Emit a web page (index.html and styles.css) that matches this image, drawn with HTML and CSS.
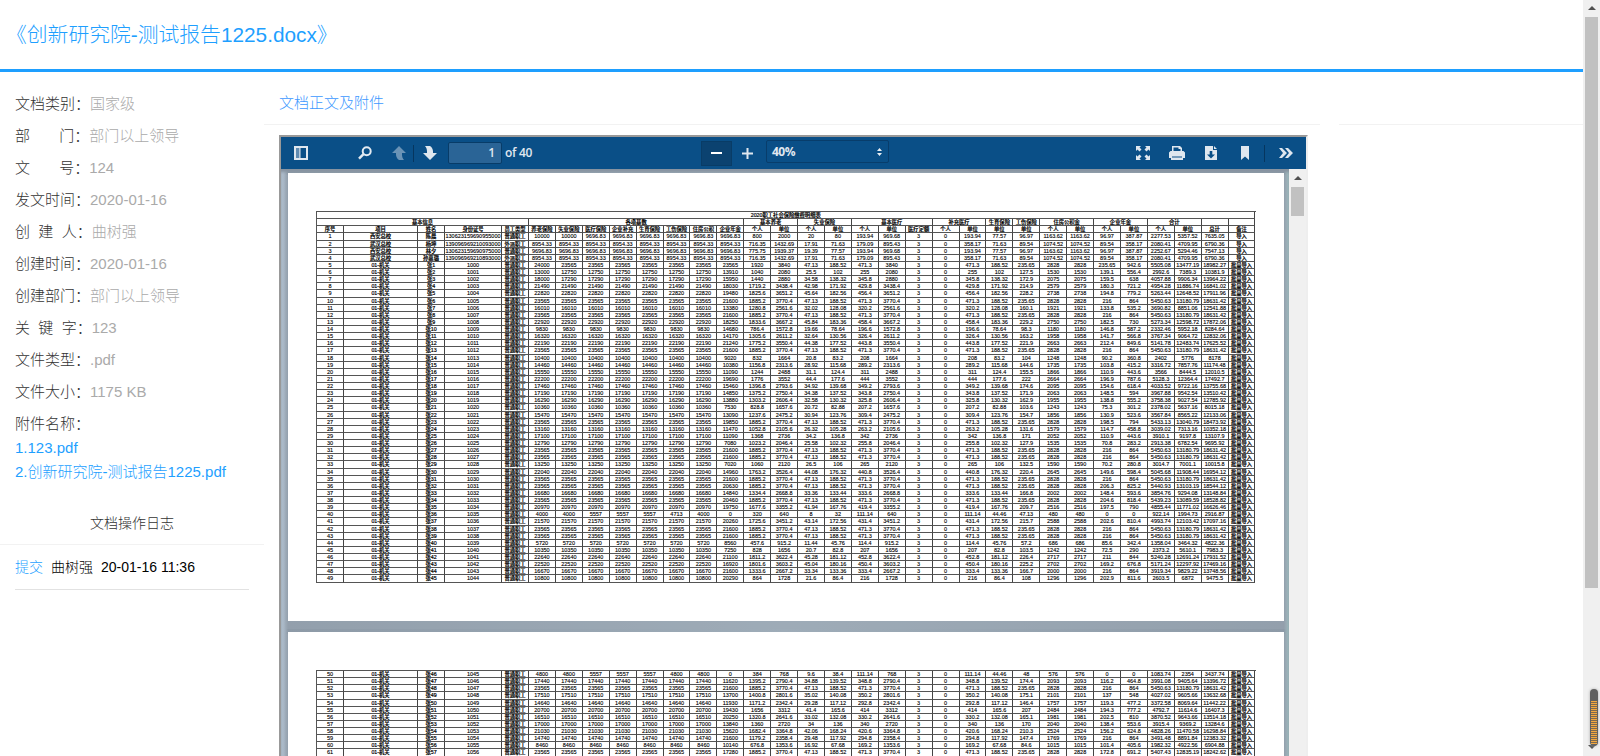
FILE: index.html
```html
<!DOCTYPE html>
<html lang="zh-CN">
<head>
<meta charset="utf-8">
<title>《创新研究院-测试报告1225.docx》</title>
<link rel="stylesheet" href="styles.css">
</head>
<body>
<div class="window">
  <div class="page">
    <header class="title">《创新研究院-测试报告1225.docx》</header>
    <div class="columns">
      <aside class="info">
        <ul class="fields">
          <li>文档类别：<span>国家级</span></li>
          <li>部&nbsp;&nbsp;&nbsp;&nbsp;&nbsp;&nbsp;&nbsp;门：<span>部门以上领导</span></li>
          <li>文&nbsp;&nbsp;&nbsp;&nbsp;&nbsp;&nbsp;&nbsp;号：<span>124</span></li>
          <li>发文时间：<span>2020-01-16</span></li>
          <li>创&nbsp;&nbsp;建&nbsp;&nbsp;人：<span>曲树强</span></li>
          <li>创建时间：<span>2020-01-16</span></li>
          <li>创建部门：<span>部门以上领导</span></li>
          <li>关&nbsp;&nbsp;键&nbsp;&nbsp;字：<span>123</span></li>
          <li>文件类型：<span>.pdf</span></li>
          <li>文件大小：<span>1175 KB</span></li>
          <li>附件名称：</li>
        </ul>
        <div class="files"><a>1.123.pdf</a><a>2.创新研究院-测试报告1225.pdf</a></div>
        <div class="log-title">文档操作日志</div>
        <div class="log"><b>提交</b><span>曲树强</span><span>20-01-16 11:36</span></div>
      </aside>
      <main class="main">
        <div class="tab">文档正文及附件</div>
        <div class="viewer">
          <div class="toolbar">
            <svg class="ic side" viewBox="0 0 14 14"><path fill-rule="evenodd" d="M0 0h14v14H0zM2 2v10h3.200V2zM6.500 2v10H12V2z"/><path d="M2 2h3v10H2z" opacity=".4"/></svg>
            <svg class="ic search" viewBox="0 0 14 14"><circle cx="8.700" cy="5.200" r="4" fill="none" stroke="#e3eaf1" stroke-width="2"/><path d="M5.500 8.200L1 12.700" stroke="#e3eaf1" stroke-width="2.400"/></svg>
            <svg class="ic up" viewBox="0 0 14 14"><path d="M7 0l7 7h-4v1.500c0 2 .6 4 2 5.500H7c-2-1.300-3-3.300-3-5.500V7H0z"/></svg>
            <i class="sep"></i>
            <svg class="ic down" viewBox="0 0 14 14"><path d="M7 14l7-7h-4V5.500C10 3.300 9 1.300 7 0H2c1.400 1.500 2 3.500 2 5.500V7H0z"/></svg>
            <div class="num">1</div><div class="of">of 40</div>
            <div class="minus"><i></i></div>
            <svg class="ic plus" viewBox="0 0 11 11"><path d="M4.500 0h2v4.500H11v2H6.500V11h-2V6.500H0v-2h4.500z"/></svg>
            <div class="zoom">40%<svg viewBox="0 0 5 8"><path d="M2.500 0L5 3H0zM2.500 8L0 5h5z"/></svg></div>
            <svg class="ic full" viewBox="0 0 14 14"><path d="M0 0h5L3.500 1.500l2 2-2 2-2-2L0 5zM14 0v5l-1.500-1.500-2 2-2-2 2-2L9 0zM0 14V9l1.500 1.500 2-2 2 2-2 2L5 14zM14 14H9l1.500-1.500-2-2 2-2 2 2L14 9z"/></svg>
            <svg class="ic print" viewBox="0 0 16 14"><path fill-rule="evenodd" d="M3 0h8l2 2v3h1.500L16 6.500V12h-2v2H2v-2H0V6.500L1.500 5H3zM4.500 1.500V5h7V3h-2V1.500zM3 10.500v1h10v-1z"/></svg>
            <svg class="ic load" viewBox="0 0 12 14"><path fill-rule="evenodd" d="M0 0h8v4h4v10H0zM4.700 5v3.500H2L6 12.500l4-4H7.300V5zM9 0l3 3H9z"/></svg>
            <svg class="ic mark" viewBox="0 0 8 14"><path d="M0 0h8v14L4 10.500 0 14z"/></svg>
            <i class="sep last"></i>
            <svg class="ic more" viewBox="0 0 14 10"><path d="M0 0h3l5 5-5 5H0l4-5zM6 0h3l5 5-5 5H6l4-5z"/></svg>
          </div>
          <div class="body">
            <div class="sheets">
              <section class="sheet"><div class="grid" id="one"></div></section>
              <section class="sheet"><div class="grid" id="two"></div></section>
            </div>
            <div class="inner-bar"><i class="tri"></i><i class="thumb"></i></div>
          </div>
        </div>
      </main>
      <div class="right"></div>
    </div>
  </div>
  <div class="outer-bar"><i class="tri"></i><i class="thumb"></i><i class="tri bottom"></i></div>
</div>
<div class="meter"><i></i></div>
<script src="table.js"></script>
</body>
</html>
```
FILE: styles.css
```css
* { box-sizing: border-box; }
body { margin: 0; height: 756px; overflow: hidden; background: #fff; color: #333; font: 15px "Liberation Sans", "Noto Sans CJK SC", sans-serif; font-weight: 300; }
.window { display: flex; height: 756px; }
.page { width: 1583px; overflow: hidden; }
.title { height: 72px; border-bottom: 3px solid #1e9fff; color: #1e9fff; font-size: 20.800px; line-height: 69px; padding-left: 6px; white-space: nowrap; text-spacing-trim: space-all; }
.columns { display: flex; align-items: flex-start; }
.info { width: 264px; padding-top: 16px; }
.fields { list-style: none; margin: 0; padding: 0 0 0 15px; line-height: 32px; text-spacing-trim: space-all; white-space: nowrap; }
.fields li { height: 32px; }
.fields span { color: #aaa; }
.files { padding-left: 15px; margin-top: -4px; }
.files a { display: block; height: 24px; line-height: 24px; color: #1e9fff; white-space: nowrap; }
.log-title { margin-top: 18px; height: 43px; line-height: 42px; border-bottom: 1px solid #f2f2f2; text-align: center; font-size: 14px; }
.log { margin: 0 15px; height: 45px; line-height: 45px; border-bottom: 1px solid #e2e2e2; font-size: 14px; color: #000; display: flex; gap: 8px; white-space: nowrap; }
.log b { font-weight: 300; color: #1e9fff; }
.main { width: 1056px; }
.tab { height: 53px; line-height: 61px; padding-left: 15px; border-bottom: 1px solid #f2f2f2; color: #3c98ff; }
.right { flex: 1; margin-left: 19px; height: 53px; border-bottom: 1px solid #f2f2f2; }
.viewer { margin: 10px 0 0 15px; width: 1029px; height: 640px; border: 2px solid #999; border-right-color: #eee; }
.toolbar { height: 32px; background: #0a4f87; display: flex; align-items: center; color: #e0e8f0; font: 600 12px "Open Sans", sans-serif; }
.ic { display: block; flex: none; width: 14px; height: 14px; fill: #dfe7ef; }
.side { margin-left: 13px; }
.search { margin-left: 50px; }
.up { margin-left: 20px; opacity: .45; }
.sep { width: 1px; height: 17px; background: #06365f; margin-left: 7px; }
.down { margin-left: 9px; }
.num { margin: -1px 0 0 11px; width: 54px; height: 22px; line-height: 20px; border: 1px solid #083c68; border-radius: 2px; background: #2a6496; text-align: right; padding-right: 6px; }
.of { margin: -2px 0 0 3px; width: 36px; letter-spacing: -.3px; }
.minus { margin-left: 160px; width: 31px; height: 25px; border: 1px solid #093c66; background: #0b4270; display: flex; align-items: center; justify-content: center; }
.minus i { width: 11px; height: 2px; background: #fff; }
.plus { width: 11px; height: 11px; margin-left: 10px; }
.zoom { margin: -3px 0 0 13px; width: 123px; height: 23px; line-height: 21px; border: 1px solid #083d6b; border-radius: 2px; padding: 0 6px 0 5px; display: flex; justify-content: space-between; align-items: center; font-weight: 700; letter-spacing: -.5px; }
.zoom svg { width: 5px; height: 8px; fill: #e8eef4; }
.full { margin-left: 247px; }
.print { width: 16px; margin-left: 19px; }
.load { width: 12px; margin-left: 20px; }
.mark { width: 8px; margin-left: 24px; }
.last { margin-left: 15px; }
.more { height: 10px; margin-left: 14px; }
.body { display: flex; height: 604px; overflow: hidden; }
.sheets { width: 1008px; padding: 4px 5px 0 7px; background: linear-gradient(90deg, #bccbda 0, #8d9aa7 7px, #9eacb8 50%, #8d9aa7 1003px, #a4c4c4 1008px); box-shadow: inset 0 3px 3px #8793a0; }
.sheet { width: 996px; height: 448px; margin-bottom: 11px; background: #fff; padding: 38px 28px 0; box-shadow: 0 5px 0 3px #9eacb855; }
.grid { width: 940px; color: #000; font: 400 5.500px/6.500px "Liberation Sans", "Noto Sans CJK SC", sans-serif; -webkit-text-stroke: .12px #000; border-top: 1px solid #555; border-left: 1px solid #555; }
.row { display: grid; height: 7.140px; grid-template-columns: 27px 74px 27px 57px 27px repeat(27, 26.920px); }
.row span { border-right: 1px solid #444; border-bottom: 1px solid #555; overflow: hidden; text-align: center; white-space: nowrap; }
.row .cn { font-size: 5.300px; font-weight: 500; -webkit-text-stroke: .2px #000; }
.inner-bar, .outer-bar { width: 17px; background: #f0f0f0; display: flex; flex-direction: column; align-items: center; }
.tri { border: 4px solid transparent; border-top: 0; border-bottom: 4px solid #505050; margin-top: 7px; }
.thumb { width: 13px; height: 29px; margin-top: 7px; background: #c1c1c1; }
.outer-bar .tri { margin-top: 6px; border-bottom-color: #505050; }
.outer-bar .thumb { height: 571px; }
.outer-bar .bottom { margin-top: auto; margin-bottom: 7px; transform: rotate(180deg); }
.meter { position: absolute; left: 1590px; top: 689px; width: 8px; height: 57px; background: #606060; border-radius: 4px; padding: 12px 1px 2px; box-shadow: 0 0 3px #aaa; }
.meter i { display: block; height: 43px; background: repeating-linear-gradient(#f2a840 0 1px, #7d6a50 1px 2px); }
```
FILE: table.js
```js
const FULL = [23565, 21600];
// [contribution base, annuity base] for each employee
const first = [[23565, 23565, 24000], [12750, 13910, 13000], [17290, 15950, 18000], [21490, 18030], [22820, 19480], FULL,
  [16010, 13380], FULL, [22920, 18250], [9830, 14680], [16320, 14170], [22190, 21240], FULL, [10400, 9020], [14460, 10380],
  [15550, 11090], [22200, 19690], [17460, 15460], [17190, 14850], [16290, 13880], [10360, 7530], [15470, 13090], [23565, 19850],
  [13160, 11470], [17100, 11090], [12790, 7080], FULL, FULL, [13250, 7020], [22040, 14960], FULL, [23565, 20630], [16680, 14840],
  [23565, 20460], [20970, 19750],
  '4000 4000 5557 5557 5557 4713 4000 0 320 640 8 32 111.14 640 3 0 111.14 44.46 47.13 480 480 0 0 922.14 1994.73 2916.87',
  [21570, 20260], FULL, FULL, [5720, 8560], [10350, 7250], [22640, 21100], [22520, 16920], [16670, 21600], [10800, 20290]];
const second = [
  '4800 4800 5557 5557 5557 4800 4800 0 384 768 9.6 38.4 111.14 768 3 0 111.14 44.46 48 576 576 0 0 1083.74 2354 3437.74',
  [17440, 11620], FULL, [17510, 13700], [14640, 11930], [20700, 19430], [16510, 20250], [17000, 13840], [21030, 15620],
  [14740, 21600], [8460, 10140], [23565, 17280], [16010, 13380]];

const r = n => Math.round(n * 100) / 100;

function figures(item) {
  if (typeof item === 'string') return item.split(' ');
  const [b, a, p = b] = item;
  const house = Math.round(b * .12);
  const mine = b * .022 + p * .08 + 3 + house + a * .01;
  const firm = p * .32 + b * .016 + b * .02 + b * .01 + house + a * .08;
  return [p, b, b, b, b, b, b, a, p * .08, p * .16, b * .002, b * .008, b * .02, p * .16, 3, 0, b * .02, b * .008, b * .01,
    house, house, a * .01, a * .04, mine, firm, mine + firm].map(r);
}

function addRow(grid, cells) {
  const row = document.createElement('div');
  row.className = 'row';
  for (const c of cells) {
    const [text, span] = Array.isArray(c) ? c : [c, 1];
    const el = document.createElement('span');
    el.textContent = text;
    if (/[\u4e00-\u9fff]/.test(text)) el.className = 'cn';
    if (span > 1) el.style.gridColumn = 'span ' + span;
    row.append(el);
  }
  grid.append(row);
}

function addPeople(grid, list, start) {
  list.forEach((item, i) => {
    const n = start + i;
    addRow(grid, [n, '01-机关', '张' + (n - 4), 995 + n, '普通职工', ...figures(item), '批量导入']);
  });
}

const one = document.getElementById('one');
addRow(one, [['2020职工社会保险缴费明细表', 32]]);
addRow(one, [['基本信息', 5], ['各项基数', 8], ['基本养老', 2], ['失业保险', 2], ['基本医疗', 3], ['补充医疗', 2], '生育保险', '工伤保险',
  ['住房公积金', 2], ['企业年金', 2], ['合计', 2], '', '']);
addRow(one, '序号 项目 姓名 身份证号 员工类型 养老保险 失业保险 医疗保险 企业补充 生育保险 工伤保险 住房公积 企业年金 个人 单位 个人 单位 个人 单位 医疗定额 个人 单位 单位 单位 个人 单位 个人 单位 个人 单位 总计 备注'.split(' '));
const low = '8954.33 '.repeat(8) + '716.35 1432.69 17.91 71.63 179.09 895.43 3 0 358.17 71.63 89.54 1074.52 1074.52 89.54 358.17 2080.41 4709.95 6790.36 导入';
const mid = '193.94 969.68 3 0 193.94 77.57 96.97 1163.62 1163.62 96.97 387.87 ';
[
  '1 西安总校 陈晨 130623159690955000 普通职工 10000 10000 ' + '9696.83 '.repeat(6) + '800 2000 20 80 ' + mid + '2277.53 5357.52 7635.05 导入',
  '2 武汉总校 杨坤 139096969210093000 外派职工 ' + low,
  '3 西安总校 林夕 130623159690975000 普通职工 ' + '9696.83 '.repeat(8) + '775.75 1939.37 19.39 77.57 ' + mid + '2252.67 5294.46 7547.13 导入',
  '4 武汉总校 孙嘉璐 139096969210893000 外派职工 ' + low
].forEach(s => addRow(one, s.split(' ')));
addPeople(one, first, 5);
addPeople(document.getElementById('two'), second, 50);
```
